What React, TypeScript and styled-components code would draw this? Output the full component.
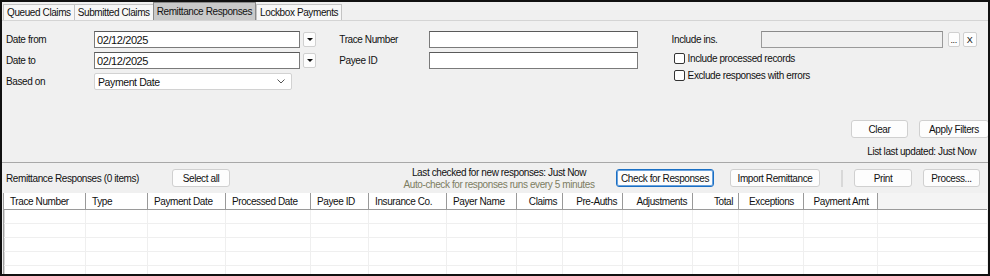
import React from 'react';
import styled, { createGlobalStyle } from 'styled-components';

const GlobalStyle = createGlobalStyle`
  html, body {
    margin: 0;
    padding: 0;
    background: #f0f0f0;
  }
  body {
    font-family: "Liberation Sans", Arial, sans-serif;
    font-size: 10px;
    letter-spacing: -0.4px;
    color: #111;
  }
`;

const Frame = styled.div`
  width: 990px;
  height: 276px;
  box-sizing: border-box;
  border: 2px solid #111;
  background: #f0f0f0;
  display: flex;
  flex-direction: column;
  overflow: hidden;
`;

const TabBar = styled.div`
  display: flex;
  align-items: flex-end;
  height: 18px;
  padding-left: 1px;
  border-bottom: 1px solid #d4d4d4;
`;

const Tab = styled.div<{ $active?: boolean }>`
  height: ${p => (p.$active ? 17 : 15)}px;
  padding: 0 3px;
  margin-right: ${p => (p.$active ? 0 : -1)}px;
  border: 1px solid ${p => (p.$active ? '#8a8a8a' : '#c4c4c4')};
  border-bottom: none;
  background: ${p => (p.$active ? '#c9c9c9' : '#f7f7f7')};
  display: flex;
  align-items: center;
  white-space: nowrap;
  position: relative;
  z-index: ${p => (p.$active ? 1 : 0)};
`;

const FilterPanel = styled.div`
  height: 142px;
  box-sizing: border-box;
  border-bottom: 1px solid #a8a8a8;
  padding: 10px 0 0 4px;
  display: flex;
  flex-direction: column;
`;

const FilterColumns = styled.div`
  display: flex;
  align-items: flex-start;
`;

const FieldColumn = styled.div<{ $width: number }>`
  width: ${p => p.$width}px;
  display: flex;
  flex-direction: column;
  gap: 4px;
`;

const FieldRow = styled.div`
  display: flex;
  align-items: center;
  height: 17px;
`;

const Label = styled.div<{ $width: number }>`
  width: ${p => p.$width}px;
  flex: none;
  white-space: nowrap;
`;

const TextBox = styled.div<{ $width: number; $disabled?: boolean }>`
  width: ${p => p.$width}px;
  height: 17px;
  box-sizing: border-box;
  border: 1px solid ${p => (p.$disabled ? '#9a9a9a' : '#7a7a7a')};
  border-top-color: ${p => (p.$disabled ? '#8a8a8a' : '#5a5a5a')};
  background: ${p => (p.$disabled ? '#f0f0f0' : '#ffffff')};
  padding: 0 2px;
  font-size: 11px;
  display: flex;
  align-items: center;
`;

const DropButton = styled.div`
  width: 13px;
  height: 15px;
  margin-left: 3px;
  box-sizing: border-box;
  border: 1px solid #d0d0d0;
  border-radius: 2px;
  background: #fdfdfd;
  display: flex;
  align-items: center;
  justify-content: center;
  &::after {
    content: '';
    border-left: 3px solid transparent;
    border-right: 3px solid transparent;
    border-top: 3px solid #111;
  }
`;

const Select = styled.div`
  width: 198px;
  height: 17px;
  box-sizing: border-box;
  border: 1px solid #d2d2d2;
  border-radius: 2px;
  background: #fff;
  padding: 0 6px 0 3px;
  display: flex;
  align-items: center;
  justify-content: space-between;
  font-size: 10.5px;
`;

const SmallButton = styled.div<{ $width: number }>`
  width: ${p => p.$width}px;
  height: 15px;
  margin-left: ${p => (p.$width > 12 ? 3 : 5)}px;
  box-sizing: border-box;
  border: 1px solid #d0d0d0;
  border-radius: 2px;
  background: #fdfdfd;
  display: flex;
  align-items: center;
  justify-content: center;
  font-size: 9px;
`;

const CheckRow = styled.label`
  display: flex;
  align-items: center;
  gap: 3px;
  height: 13px;
  margin-left: 2px;
`;

const CheckBox = styled.span`
  width: 11px;
  height: 11px;
  box-sizing: border-box;
  border: 1px solid #333;
  border-radius: 2px;
  background: #fff;
`;

const ActionRow = styled.div`
  display: flex;
  justify-content: flex-end;
  gap: 11px;
  margin-top: 30px;
  margin-right: -1px;
`;

const Button = styled.div<{ $width: number; $focused?: boolean }>`
  width: ${p => p.$width}px;
  height: 18px;
  box-sizing: border-box;
  border: 1px solid ${p => (p.$focused ? '#1a6fc4' : '#d0d0d0')};
  box-shadow: ${p => (p.$focused ? 'inset 0 0 0 1px #6aa2dc' : 'none')};
  border-radius: 3px;
  background: #fdfdfd;
  display: flex;
  align-items: center;
  justify-content: center;
  white-space: nowrap;
`;

const StatusLine = styled.div`
  text-align: right;
  margin-top: 8px;
  padding-right: 12px;
`;

const ListToolbar = styled.div`
  height: 30px;
  display: flex;
  align-items: center;
  padding-left: 4px;
`;

const ListTitle = styled.div`
  width: 166px;
`;

const CheckInfo = styled.div`
  width: 220px;
  text-align: center;
  line-height: 12px;
  margin: 1px 7px 0 159px;
  span {
    display: block;
    color: #7d7d62;
  }
`;

const ToolbarGroup = styled.div<{ $gap: number }>`
  display: flex;
  align-items: center;
  gap: ${p => p.$gap}px;
`;

const ToolbarSep = styled.div`
  width: 2px;
  height: 17px;
  background: #d8d8d8;
  margin: 0 11px 0 21px;
`;

const Grid = styled.div`
  flex: 1;
  margin: 0 1px;
  border-left: 1px solid #a0a0a0;
  box-shadow: inset 1px 0 0 #d8d8d8;
  background: #fff;
  display: flex;
  flex-direction: column;
  overflow: hidden;
`;

const HeaderRow = styled.div`
  display: flex;
  height: 16px;
  background: #f4f4f4;
  border-bottom: 1px solid #9a9a9a;
  flex: none;
`;

const HeaderCell = styled.div<{ $width: number; $align: string }>`
  width: ${p => p.$width}px;
  flex: none;
  box-sizing: border-box;
  background: #fff;
  border-right: 1px solid #9a9a9a;
  padding: 0 5px 0 6px;
  display: flex;
  align-items: center;
  justify-content: ${p => p.$align};
  white-space: nowrap;
`;

const BodyRow = styled.div`
  display: flex;
  height: 14px;
  box-sizing: border-box;
  flex: none;
  border-bottom: 1px solid #efefef;
`;

const BodyCell = styled.div<{ $width: number }>`
  width: ${p => p.$width}px;
  flex: none;
  box-sizing: border-box;
  border-right: 1px solid #efefef;
`;

const columns: { title: string; width: number; align: string }[] = [
  { title: 'Trace Number', width: 82, align: 'flex-start' },
  { title: 'Type', width: 62, align: 'flex-start' },
  { title: 'Payment Date', width: 78, align: 'flex-start' },
  { title: 'Processed Date', width: 85, align: 'flex-start' },
  { title: 'Payee ID', width: 58, align: 'flex-start' },
  { title: 'Insurance Co.', width: 78, align: 'flex-start' },
  { title: 'Payer Name', width: 70, align: 'flex-start' },
  { title: 'Claims', width: 46, align: 'flex-end' },
  { title: 'Pre-Auths', width: 60, align: 'flex-end' },
  { title: 'Adjustments', width: 70, align: 'flex-end' },
  { title: 'Total', width: 46, align: 'flex-end' },
  { title: 'Exceptions', width: 65, align: 'center' },
  { title: 'Payment Amt', width: 74, align: 'center' },
];

const App = () => {
  return (
    <>
      <GlobalStyle />
      <Frame>
        <TabBar>
          <Tab>Queued Claims</Tab>
          <Tab>Submitted Claims</Tab>
          <Tab $active>Remittance Responses</Tab>
          <Tab>Lockbox Payments</Tab>
        </TabBar>

        <FilterPanel>
          <FilterColumns>
            <FieldColumn $width={335}>
              <FieldRow>
                <Label $width={88}>Date from</Label>
                <TextBox $width={206}>02/12/2025</TextBox>
                <DropButton />
              </FieldRow>
              <FieldRow>
                <Label $width={88}>Date to</Label>
                <TextBox $width={206}>02/12/2025</TextBox>
                <DropButton />
              </FieldRow>
              <FieldRow>
                <Label $width={88}>Based on</Label>
                <Select>
                  Payment Date
                  <svg width="8" height="5" viewBox="0 0 8 5">
                    <path d="M0.5 0.5 L4 4 L7.5 0.5" fill="none" stroke="#555" strokeWidth="1" />
                  </svg>
                </Select>
              </FieldRow>
            </FieldColumn>

            <FieldColumn $width={334}>
              <FieldRow>
                <Label $width={90}>Trace Number</Label>
                <TextBox $width={209} />
              </FieldRow>
              <FieldRow>
                <Label $width={90}>Payee ID</Label>
                <TextBox $width={209} />
              </FieldRow>
            </FieldColumn>

            <FieldColumn $width={318}>
              <FieldRow>
                <Label $width={89}>Include ins.</Label>
                <TextBox $width={182} $disabled />
                <SmallButton $width={12}>...</SmallButton>
                <SmallButton $width={14}>X</SmallButton>
              </FieldRow>
              <CheckRow>
                <CheckBox />
                Include processed records
              </CheckRow>
              <CheckRow>
                <CheckBox />
                Exclude responses with errors
              </CheckRow>
            </FieldColumn>
          </FilterColumns>

          <ActionRow>
            <Button $width={57}>Clear</Button>
            <Button $width={70}>Apply Filters</Button>
          </ActionRow>
          <StatusLine>List last updated: Just Now</StatusLine>
        </FilterPanel>

        <ListToolbar>
          <ListTitle>Remittance Responses (0 items)</ListTitle>
          <Button $width={58}>Select all</Button>
          <CheckInfo>
            Last checked for new responses: Just Now
            <span>Auto-check for responses runs every 5 minutes</span>
          </CheckInfo>
          <ToolbarGroup $gap={16}>
            <Button $width={98} $focused>Check for Responses</Button>
            <Button $width={90}>Import Remittance</Button>
          </ToolbarGroup>
          <ToolbarSep />
          <ToolbarGroup $gap={11}>
            <Button $width={58}>Print</Button>
            <Button $width={57}>Process...</Button>
          </ToolbarGroup>
        </ListToolbar>

        <Grid>
          <HeaderRow>
            {columns.map(c => (
              <HeaderCell key={c.title} $width={c.width} $align={c.align}>
                {c.title}
              </HeaderCell>
            ))}
          </HeaderRow>
          {[0, 1, 2, 3, 4].map(r => (
            <BodyRow key={r}>
              {columns.map(c => (
                <BodyCell key={c.title} $width={c.width} />
              ))}
            </BodyRow>
          ))}
        </Grid>
      </Frame>
    </>
  );
};

export default App;
